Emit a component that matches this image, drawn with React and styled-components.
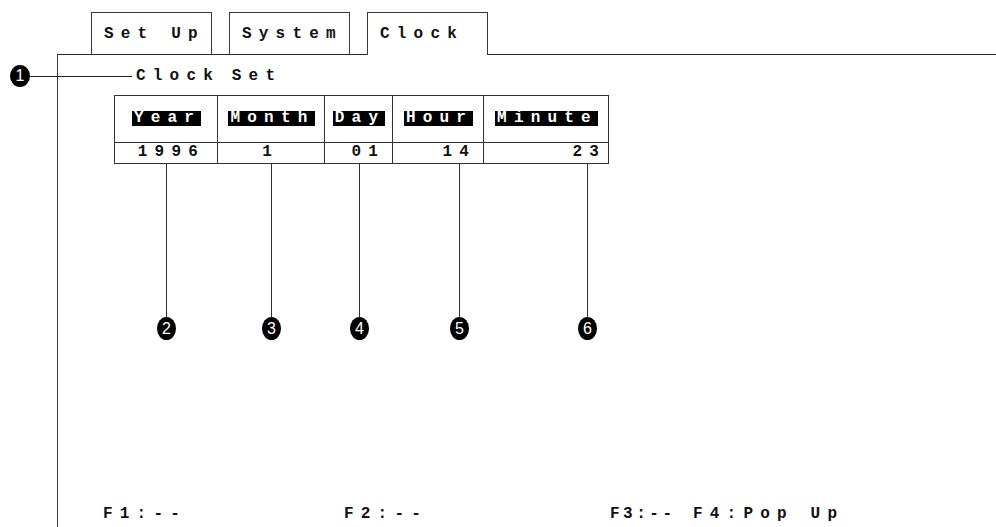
import React from "react";
import styled, { createGlobalStyle } from "styled-components";

const Global = createGlobalStyle`
  html, body { margin: 0; padding: 0; background: #fff; }
  body { font-family: "Liberation Mono", "Courier New", monospace; color: #111; }
  * { box-sizing: border-box; }
`;

const Page = styled.div`
  width: 996px;
  height: 527px;
  overflow: hidden;
  display: flex;
  flex-direction: column;
  padding-top: 12px;
`;

const TabBar = styled.div`
  display: flex;
  gap: 17px;
  margin-left: 91px;
  height: 43px;
  margin-bottom: -1px;
  position: relative;
  z-index: 1;
`;

const Tab = styled.div`
  width: 121px;
  height: 43px;
  display: flex;
  align-items: center;
  padding-left: 12px;
  padding-bottom: 1px;
  border: 1px solid #3a3a3a;
  border-bottom: none;
  background: ${(p) => (p.$active ? "#fff" : "transparent")};
  font-size: 16px;
  font-weight: 700;
  letter-spacing: 7.2px;
  white-space: pre;
`;

const Panel = styled.div`
  flex: 1;
  margin-left: 57px;
  border-top: 1px solid #2a2a2a;
  border-left: 1px solid #3a3a3a;
  display: flex;
  flex-direction: column;
`;

const HeadingRow = styled.div`
  display: flex;
  align-items: center;
  height: 22px;
  margin-top: 10px;
  margin-left: -48px;
`;

const Marker = styled.span`
  flex: none;
  width: ${(p) => p.$w || 19}px;
  height: ${(p) => p.$h || 20}px;
  border-radius: 50%;
  background: #000;
  color: #fff;
  display: flex;
  align-items: center;
  justify-content: center;
  font-family: "Liberation Sans", Arial, sans-serif;
  font-size: 16px;
  line-height: 1;
`;

const Leader = styled.span`
  flex: none;
  width: ${(p) => p.$len}px;
  height: 1px;
  background: #222;
`;

const Title = styled.span`
  margin-left: 4px;
  font-size: 16px;
  font-weight: 700;
  letter-spacing: 7.2px;
  word-spacing: -5px;
  white-space: pre;
`;

const COLS = "103px 107px 68px 91px 125px";

const Grid = styled.div`
  display: grid;
  grid-template-columns: ${COLS};
  margin-left: 56px;
  margin-top: 8px;
  width: 495px;
  border-top: 1px solid #333;
  border-left: 1px solid #333;
`;

const HeadCell = styled.div`
  height: 47px;
  border-right: 1px solid #333;
  border-bottom: 1px solid #333;
  display: flex;
  align-items: center;
  justify-content: center;
  padding-bottom: 2px;
`;

const HeadLabel = styled.span`
  display: inline-block;
  height: 15px;
  line-height: 15px;
  padding-left: 2px;
  margin-right: -1px;
  background: #000;
  color: #fff;
  font-size: 16px;
  font-weight: 700;
  letter-spacing: 7.2px;
`;

const ValueCell = styled.div`
  height: 21px;
  border-right: 1px solid #333;
  border-bottom: 1px solid #333;
  text-align: right;
  padding-right: ${(p) => p.$pr}px;
  font-size: 16px;
  font-weight: 700;
  letter-spacing: 7.2px;
  line-height: 18px;
`;

const CalloutRow = styled.div`
  display: grid;
  grid-template-columns: ${COLS};
  margin-left: 57px;
  width: 494px;
`;

const Callout = styled.div`
  width: 1px;
  margin-left: ${(p) => p.$x}px;
  display: flex;
  flex-direction: column;
  align-items: center;
`;

const Drop = styled.span`
  width: 1px;
  height: 153px;
  background: #333;
`;

const Footer = styled.div`
  margin-top: auto;
  display: flex;
  padding-left: 45px;
  padding-bottom: 3px;
  height: 24px;
  align-items: center;
`;

const FKey = styled.span`
  flex: none;
  width: ${(p) => (p.$w ? `${p.$w}px` : "auto")};
  font-size: 16px;
  font-weight: 700;
  letter-spacing: ${(p) => p.$ls ?? 7.2}px;
  white-space: pre;
`;

const columns = [
  { label: "Year", value: "1996", pr: 12, x: 51, n: "2" },
  { label: "Month", value: "1", pr: 45, x: 53, n: "3" },
  { label: "Day", value: "01", pr: 7, x: 34, n: "4" },
  { label: "Hour", value: "14", pr: 7, x: 66, n: "5" },
  { label: "Minute", value: "23", pr: 2, x: 103, n: "6" },
];

export default function App() {
  return (
    <>
      <Global />
      <Page>
        <TabBar>
          <Tab>Set Up</Tab>
          <Tab>System</Tab>
          <Tab $active>Clock</Tab>
        </TabBar>
        <Panel>
          <HeadingRow>
            <Marker $w={20} $h={22}>1</Marker>
            <Leader $len={102} />
            <Title>Clock Set</Title>
          </HeadingRow>
          <Grid>
            {columns.map((c) => (
              <HeadCell key={c.label}>
                <HeadLabel>{c.label}</HeadLabel>
              </HeadCell>
            ))}
            {columns.map((c) => (
              <ValueCell key={c.label} $pr={c.pr}>
                {c.value}
              </ValueCell>
            ))}
          </Grid>
          <CalloutRow>
            {columns.map((c) => (
              <Callout key={c.label} $x={c.x}>
                <Drop />
                <Marker $w={19} $h={23}>{c.n}</Marker>
              </Callout>
            ))}
          </CalloutRow>
          <Footer>
            <FKey $w={241}>F1:--</FKey>
            <FKey $w={266}>F2:--</FKey>
            <FKey $w={83} $ls={3.5}>F3:--</FKey>
            <FKey>F4:Pop Up</FKey>
          </Footer>
        </Panel>
      </Page>
    </>
  );
}
